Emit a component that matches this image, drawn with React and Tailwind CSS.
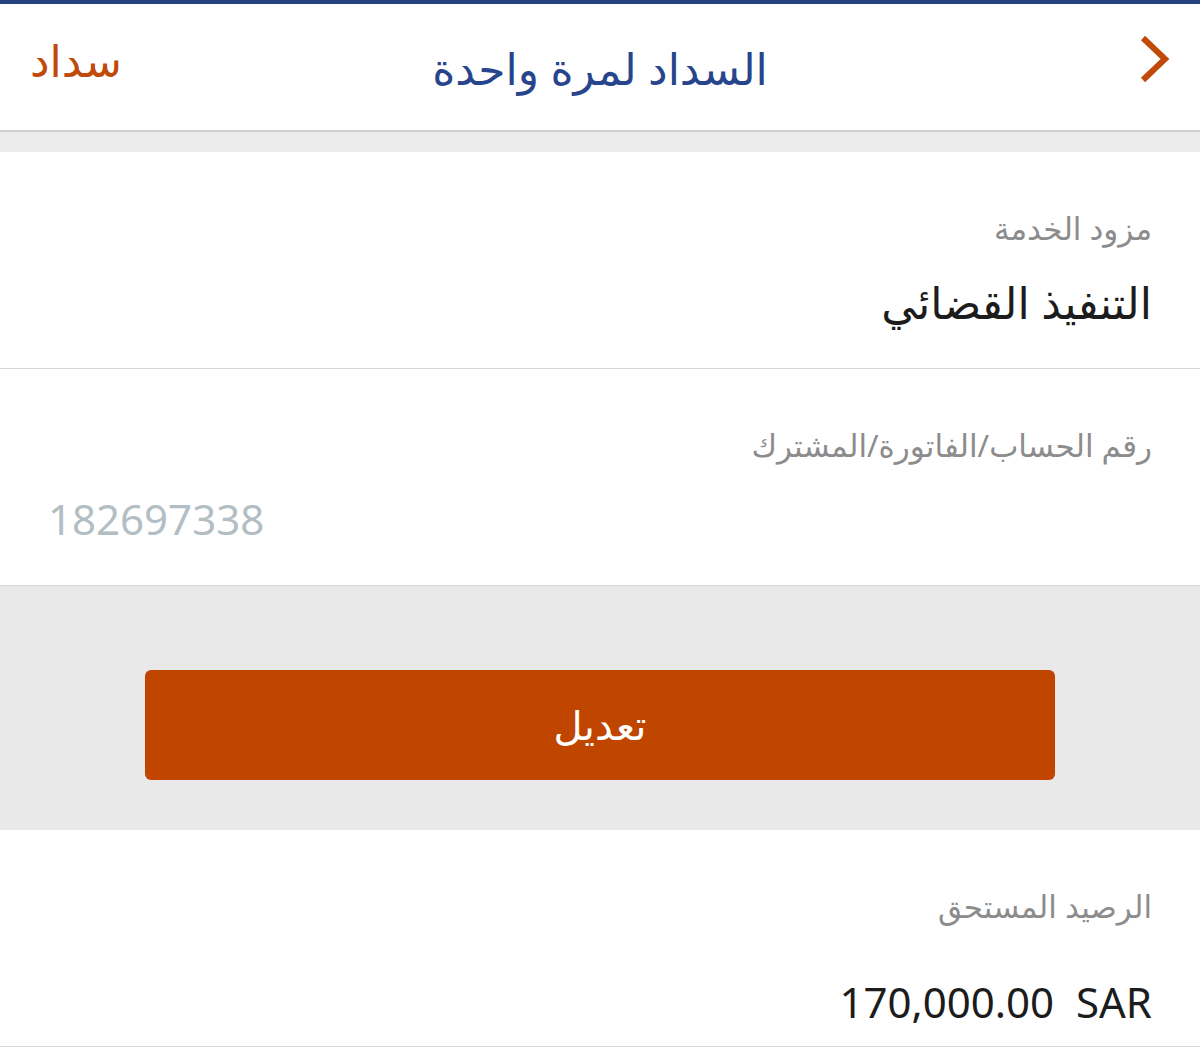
import React from 'react';

const font = { fontFamily: '"Noto Sans", "DejaVu Sans", sans-serif' };

const Field = ({ label, gap = 'mt-[22px]', children }) => (
  <section className="bg-white border-b border-[#d6d6d6] h-[217px] px-12 flex flex-col">
    <div className="pt-[54px] text-[31px] leading-[44px] text-[#8c8c8c]">{label}</div>
    <div className={`${gap} flex`}>{children}</div>
  </section>
);

const App = () => {
  return (
    <div dir="rtl" style={font} className="w-[1200px] min-h-[1051px] bg-white overflow-hidden">
      {/* top bar */}
      <div className="h-1 bg-[#26407f]" />
      <header className="h-[128px] bg-white border-b-2 border-[#cfcfcf] flex items-center justify-between pr-7 pl-[30px] relative">
        <svg width="34" height="52" viewBox="0 0 34 52" className="mt-[-16px]">
          <path d="M5 5 L27 26 L5 47" fill="none" stroke="#c04a0a" strokeWidth="6" />
        </svg>
        <h1 className="absolute left-1/2 -translate-x-1/2 top-[34px] text-[44px] leading-[60px] text-[#27458c] whitespace-nowrap">
          السداد لمرة واحدة
        </h1>
        <span className="text-[44px] leading-[60px] text-[#c04a0a] mt-[-14px]">سداد</span>
      </header>
      <div className="h-5 bg-[#ececec]" />

      <Field label="مزود الخدمة">
        <span className="text-[44px] leading-[60px] text-[#1c1c1c]">التنفيذ القضائي</span>
      </Field>

      <Field label="رقم الحساب/الفاتورة/المشترك">
        <span className="mr-auto text-[42px] leading-[60px] text-[#b3bec4]">182697338</span>
      </Field>

      <div className="h-[244px] bg-[#e9e9ea] flex justify-center pt-[84px]">
        <button className="w-[910px] h-[110px] rounded-md bg-[#c04600] text-white text-[40px]">
          تعديل
        </button>
      </div>

      <Field label="الرصيد المستحق" gap="mt-[44px]">
        <span dir="ltr" className="text-[42px] leading-[60px] text-[#1c1c1c] whitespace-pre">
          170,000.00  SAR
        </span>
      </Field>
    </div>
  );
};

export default App;
